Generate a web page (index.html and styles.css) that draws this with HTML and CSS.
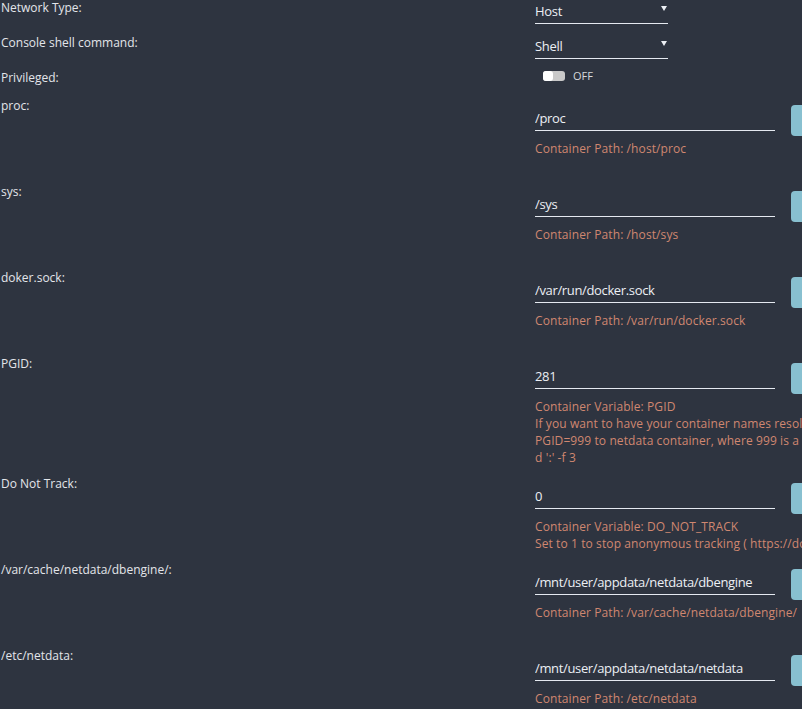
FILE: index.html
```html
<!DOCTYPE html>
<html lang="en">
<head>
    <meta charset="UTF-8">
    <meta name="viewport" content="width=device-width, initial-scale=1.0">
    <title>Update Container - netdata</title>
    <link rel="stylesheet" href="styles.css">
</head>
<body>

<form class="template" id="template-form">
    <div class="row row-select">
        <label class="row-label" for="network">Network Type:</label>
        <div class="row-field">
            <div class="select-wrap">
                <select id="network">
                    <option>Host</option>
                    <option>Bridge</option>
                    <option>None</option>
                </select>
            </div>
        </div>
    </div>

    <div class="row row-select">
        <label class="row-label" for="shell">Console shell command:</label>
        <div class="row-field">
            <div class="select-wrap">
                <select id="shell">
                    <option>Shell</option>
                    <option>Bash</option>
                </select>
            </div>
        </div>
    </div>

    <div class="row row-toggle">
        <label class="row-label" for="privileged">Privileged:</label>
        <div class="row-field">
            <label class="switch">
                <input type="checkbox" id="privileged">
                <span class="switch-track"><span class="switch-knob"></span></span>
                <span class="switch-text">OFF</span>
            </label>
        </div>
    </div>

    <!-- Paths and variables -->
    <div class="row row-config">
        <label class="row-label" for="cfg-proc">proc:</label>
        <div class="row-field">
            <div class="field-line">
                <input class="text-input" type="text" id="cfg-proc" value="/proc">
                <button class="edit-btn" type="button" aria-label="Edit"></button>
            </div>
            <div class="desc">Container Path: /host/proc</div>
        </div>
    </div>

    <div class="row row-config">
        <label class="row-label" for="cfg-sys">sys:</label>
        <div class="row-field">
            <div class="field-line">
                <input class="text-input" type="text" id="cfg-sys" value="/sys">
                <button class="edit-btn" type="button" aria-label="Edit"></button>
            </div>
            <div class="desc">Container Path: /host/sys</div>
        </div>
    </div>

    <div class="row row-config">
        <label class="row-label" for="cfg-sock">doker.sock:</label>
        <div class="row-field">
            <div class="field-line">
                <input class="text-input" type="text" id="cfg-sock" value="/var/run/docker.sock">
                <button class="edit-btn" type="button" aria-label="Edit"></button>
            </div>
            <div class="desc">Container Path: /var/run/docker.sock</div>
        </div>
    </div>

    <div class="row row-config">
        <label class="row-label" for="cfg-pgid">PGID:</label>
        <div class="row-field">
            <div class="field-line">
                <input class="text-input" type="text" id="cfg-pgid" value="281">
                <button class="edit-btn" type="button" aria-label="Edit"></button>
            </div>
            <div class="desc">Container Variable: PGID<br>If you want to have your container names resolved by netdata it needs to have access to docker group. To achive that just add environment variable<br>PGID=999 to netdata container, where 999 is a docker group id from your host. This number can be found by running: grep docker /etc/group | cut -<br>d ':' -f 3</div>
        </div>
    </div>

    <div class="row row-config">
        <label class="row-label" for="cfg-track">Do Not Track:</label>
        <div class="row-field">
            <div class="field-line">
                <input class="text-input" type="text" id="cfg-track" value="0">
                <button class="edit-btn" type="button" aria-label="Edit"></button>
            </div>
            <div class="desc">Container Variable: DO_NOT_TRACK<br>Set to 1 to stop anonymous tracking ( https://docs.netdata.cloud/docs/anonymous-statistics/ )</div>
        </div>
    </div>

    <div class="row row-config">
        <label class="row-label" for="cfg-dbengine">/var/cache/netdata/dbengine/:</label>
        <div class="row-field">
            <div class="field-line">
                <input class="text-input" type="text" id="cfg-dbengine" value="/mnt/user/appdata/netdata/dbengine">
                <button class="edit-btn" type="button" aria-label="Edit"></button>
            </div>
            <div class="desc">Container Path: /var/cache/netdata/dbengine/</div>
        </div>
    </div>

    <div class="row row-config">
        <label class="row-label" for="cfg-etc">/etc/netdata:</label>
        <div class="row-field">
            <div class="field-line">
                <input class="text-input" type="text" id="cfg-etc" value="/mnt/user/appdata/netdata/netdata">
                <button class="edit-btn" type="button" aria-label="Edit"></button>
            </div>
            <div class="desc">Container Path: /etc/netdata</div>
        </div>
    </div>
</form>

</body>
</html>
```

FILE: styles.css
```css
body {
    margin: 0;
    background-color: #2e3440;
    font-family: "Open Sans", "Noto Sans", sans-serif;
    overflow: hidden;
}

.template {
    margin-top: -1px;
    padding-left: 1px;
}

.row {
    display: grid;
    grid-template-columns: 534px 1fr;
}

.row-label {
    font-size: 12px;
    line-height: 17px;
    color: #e3e5ea;
}

.row-select {
    height: 35px;
}

.row-toggle {
    height: 28px;
}

.row-config {
    padding-bottom: 9px;
}

.select-wrap {
    position: relative;
    width: 133px;
}

.select-wrap::after {
    content: "";
    position: absolute;
    right: 1px;
    top: 7px;
    border-left: 3px solid transparent;
    border-right: 3px solid transparent;
    border-top: 5px solid #eceff4;
    pointer-events: none;
}

select {
    appearance: none;
    width: 133px;
    height: 25px;
    padding: 0;
    border: none;
    border-bottom: 1px solid #e5e9f0;
    background: transparent;
    color: #eceff4;
    font-family: inherit;
    font-size: 13px;
    letter-spacing: -0.3px;
    outline: none;
}

.switch {
    display: flex;
    align-items: center;
    gap: 8px;
    margin: 1px 0 0 8px;
    cursor: pointer;
}

.switch input {
    display: none;
}

.switch-track {
    display: block;
    width: 22px;
    height: 10px;
    border-radius: 3px;
    background-color: #c9c9c9;
}

.switch-knob {
    display: block;
    width: 10px;
    height: 10px;
    border-radius: 3px;
    background-color: #fff;
}

.switch-text {
    font-size: 11px;
    line-height: 12px;
    color: #d6d8dc;
}

.field-line {
    display: flex;
    align-items: flex-start;
    gap: 16px;
    padding-top: 8px;
}

.text-input {
    flex: none;
    width: 240px;
    height: 26px;
    box-sizing: border-box;
    padding: 0;
    border: none;
    border-bottom: 1px solid #e5e9f0;
    background: transparent;
    color: #eceff4;
    font-family: inherit;
    font-size: 13px;
    letter-spacing: -0.35px;
    outline: none;
}

.edit-btn {
    flex: none;
    width: 60px;
    height: 31px;
    border: none;
    border-radius: 4px;
    background-color: #88c0d0;
    cursor: pointer;
}

.desc {
    margin-top: 4px;
    min-height: 34px;
    font-size: 12px;
    letter-spacing: 0.1px;
    line-height: 17px;
    color: #d08770;
    white-space: nowrap;
}
```
